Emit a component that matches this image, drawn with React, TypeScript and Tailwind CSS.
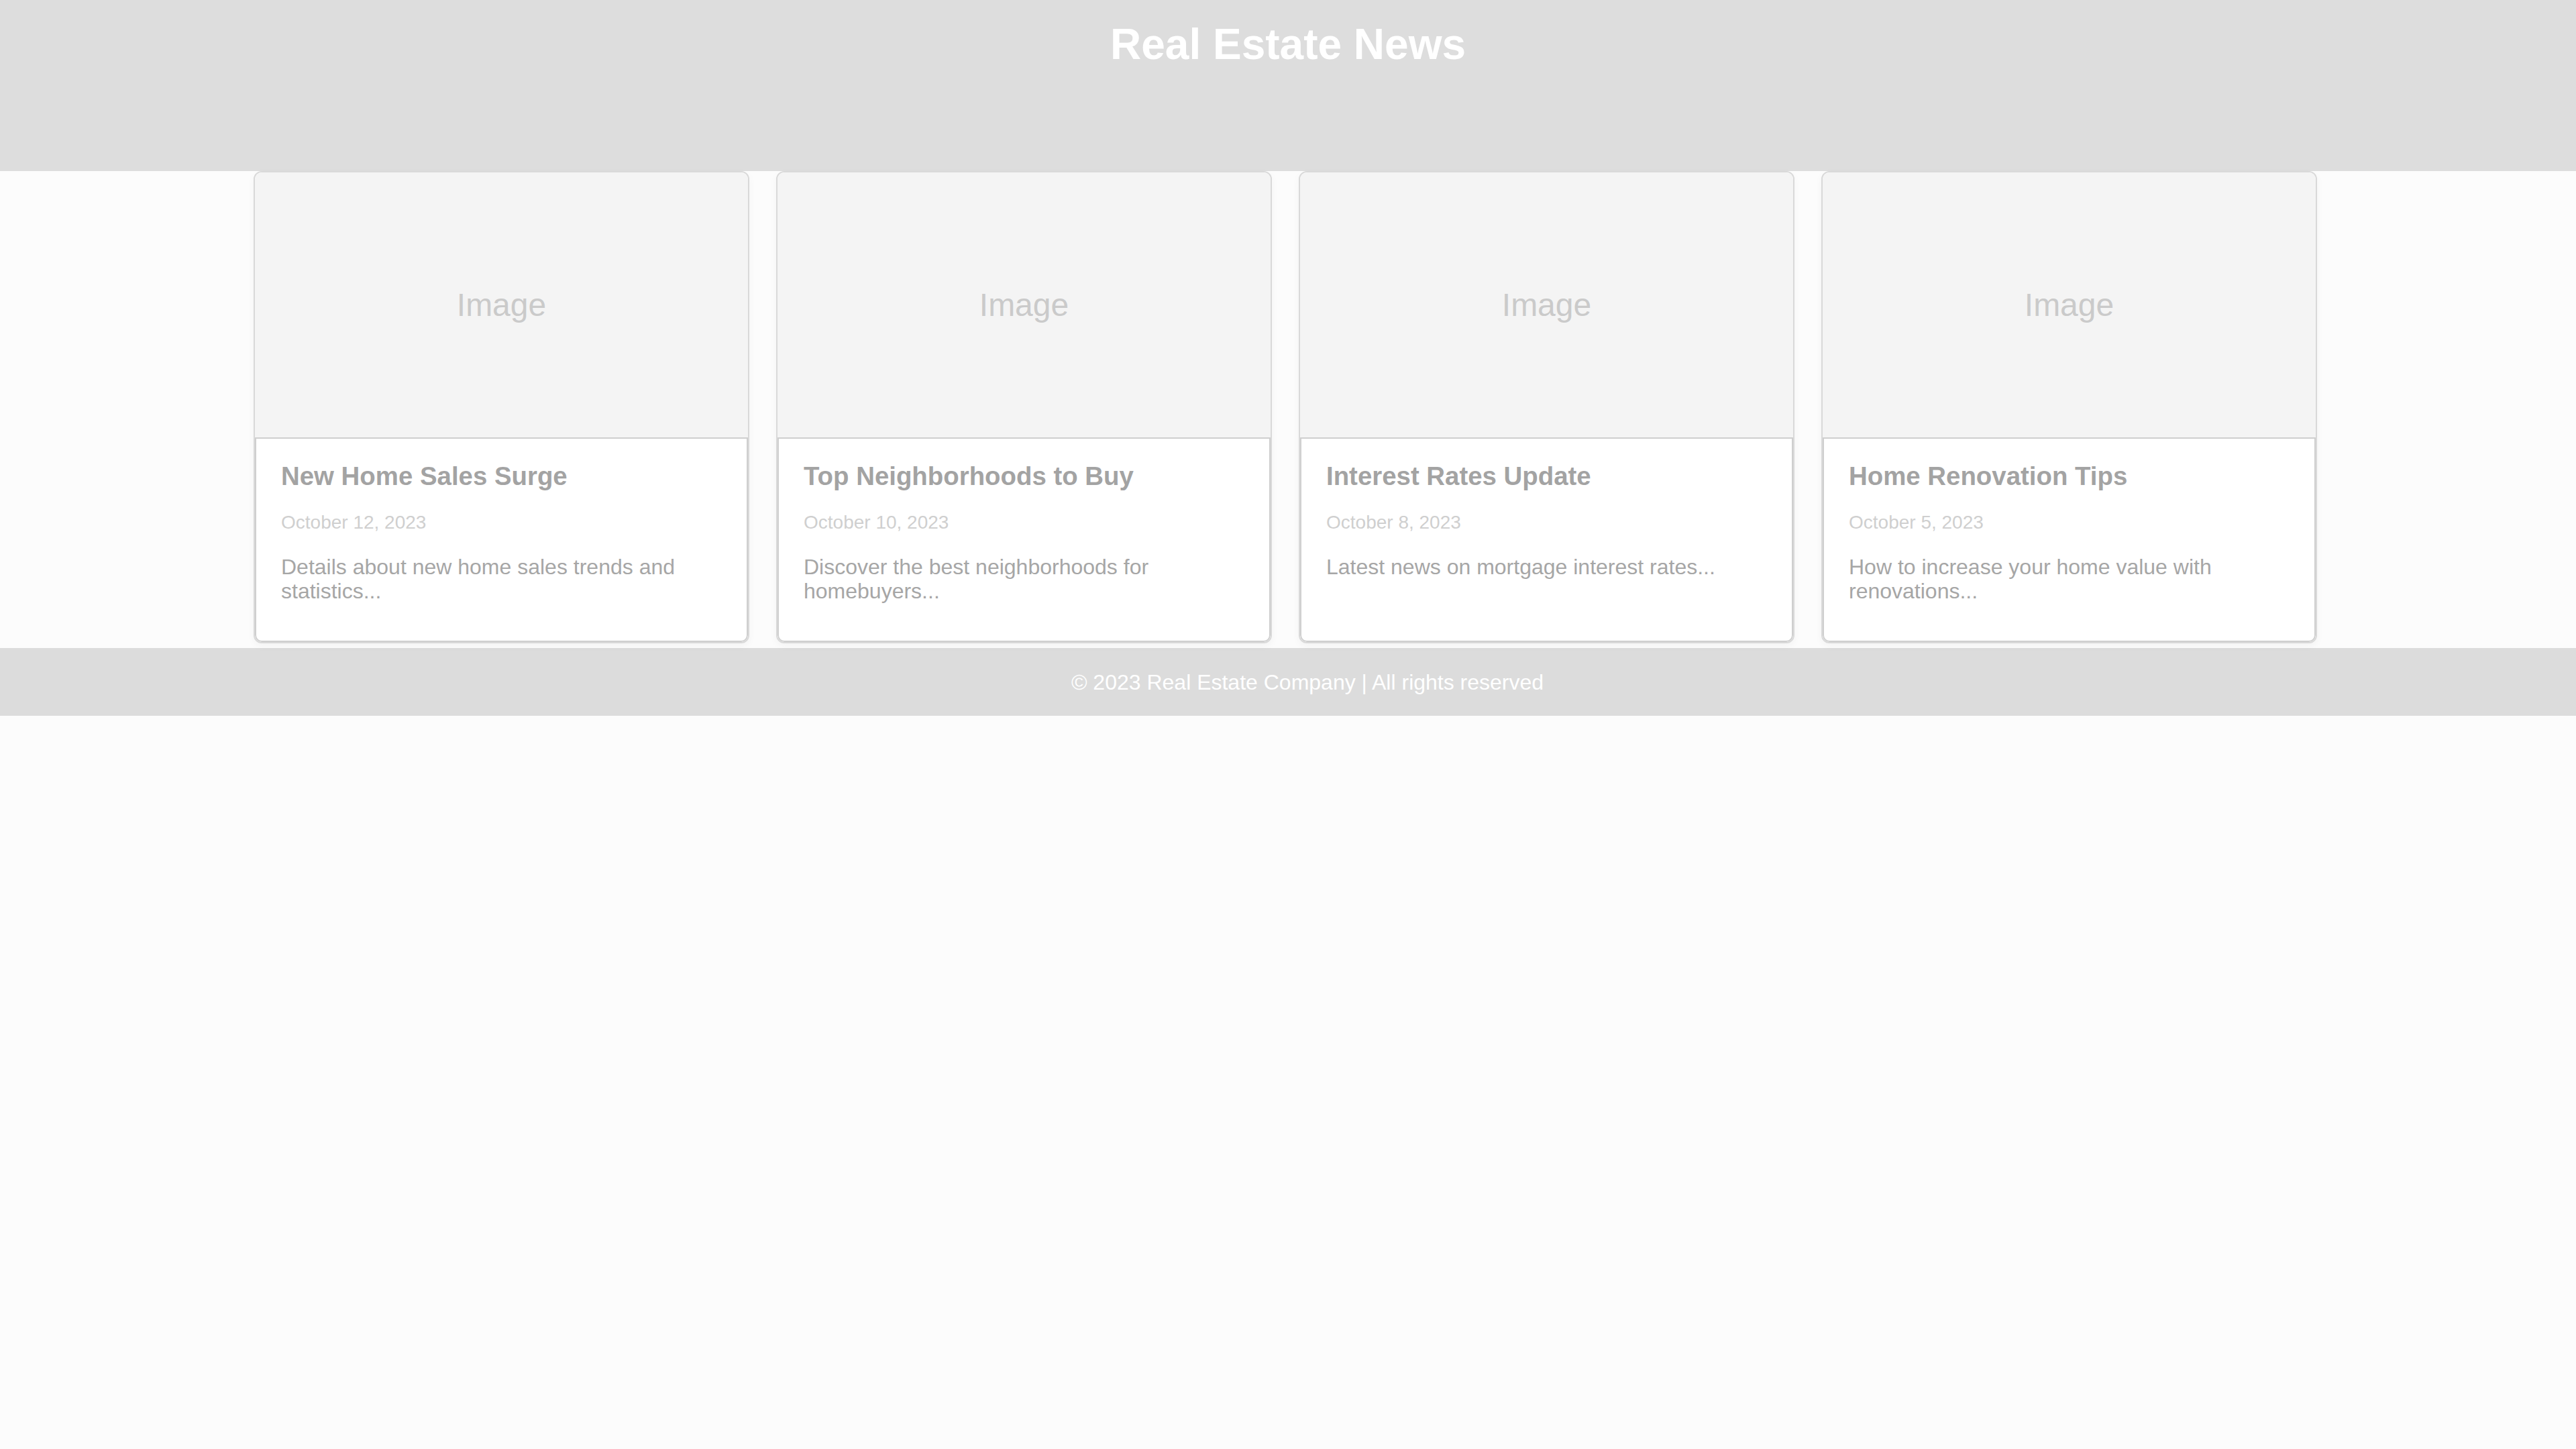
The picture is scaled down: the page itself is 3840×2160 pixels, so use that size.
const ARTICLES = [
  {
    title: 'New Home Sales Surge',
    date: 'October 12, 2023',
    summary: 'Details about new home sales trends and statistics...',
  },
  {
    title: 'Top Neighborhoods to Buy',
    date: 'October 10, 2023',
    summary: 'Discover the best neighborhoods for homebuyers...',
  },
  {
    title: 'Interest Rates Update',
    date: 'October 8, 2023',
    summary: 'Latest news on mortgage interest rates...',
  },
  {
    title: 'Home Renovation Tips',
    date: 'October 5, 2023',
    summary: 'How to increase your home value with renovations...',
  },
]

function NewsCard({ title, date, summary }: { title: string; date: string; summary: string }) {
  return (
    <article className="bg-white border-[2px] border-[#d9d9d9] rounded-[12px] overflow-hidden shadow-[0_4px_12px_rgba(0,0,0,0.04)] flex flex-col">
      {/* Image placeholder */}
      <div className="h-[395px] bg-[#f4f4f4] flex items-center justify-center">
        <span className="text-[48px] text-[#cacaca]">Image</span>
      </div>

      {/* Body */}
      <div className="flex-1 border-[2px] border-[#cfcfcf] rounded-b-[10px] px-[37px] pt-[34px] pb-[56px]">
        <h2 className="text-[38.4px] leading-[44px] font-bold text-[#a3a3a3] mb-[31px]">{title}</h2>
        <p className="text-[28px] leading-[32px] text-[#cfcfcf] mb-[32px]">{date}</p>
        <p className="text-[32px] leading-[36px] text-[#a6a6a6]">{summary}</p>
      </div>
    </article>
  )
}

export default function App() {
  return (
    <div className="min-h-screen bg-[#fcfcfc] font-['Liberation_Sans',Arial,sans-serif]">
      {/* Header */}
      <header className="h-[255px] bg-[#dddddd] pt-[30px]">
        <h1 className="text-center text-[64px] leading-[72px] font-bold text-white">Real Estate News</h1>
      </header>

      {/* Articles */}
      <main className="ml-[378px] w-[3076px] grid grid-cols-4 gap-[40px] pb-[7px]">
        {ARTICLES.map((a) => (
          <NewsCard key={a.title} {...a} />
        ))}
      </main>

      {/* Footer */}
      <footer className="h-[101px] bg-[#dcdcdc] flex items-center justify-center pl-[58px]">
        <p className="text-[32px] text-white">© 2023 Real Estate Company | All rights reserved</p>
      </footer>
    </div>
  )
}
